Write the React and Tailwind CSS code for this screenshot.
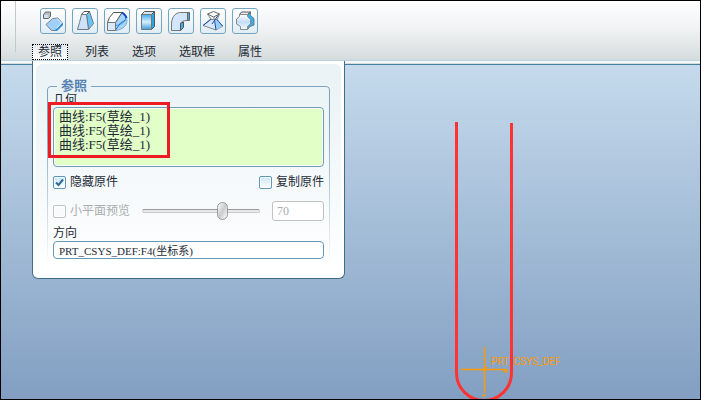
import React, { useState } from 'react';

const SHAPES = [
  {
    label: '缩放',
    art: (
      <>
        <path d="m2.5 5.5 2-2.500h5v4.500l-2 2h-5z" fill="#b4c1cc" stroke="#666" />
        <path d="M3 6h4v3H3z" fill="#cfe0f0" />
        <path d="M11.500 9.500 17 9l4.500 5.500v1.500L16 21.500h-5.500L5 15.500z" fill="#a0cffa" stroke="#7c858f" />
        <path d="m14 21 7.500-7.500V16L16 21.500h-5z" fill="#1b8eec" />
        <path d="m16 9.500 4.500 4.500-5 5.500" stroke="#e5f3ff" />
      </>
    ),
  },
  {
    label: '拔模',
    art: (
      <>
        <path d="m13.500 5.500 3-3 4 12-5 6z" fill="#62c8fb" stroke="#777" />
        <path d="m8.500 5.500 2.500-3h5.500l-3 3z" fill="#fff" stroke="#555" />
        <path d="M8.500 5.500h5l2 15h-11l2-7z" fill="#cfe2fc" stroke="#777" />
      </>
    ),
  },
  {
    label: '扫描',
    art: (
      <>
        <path d="M17 3.500c4 2 5 5 5 8 0 6-5 9-11.500 10v-8z" fill="#a5d6f7" stroke="#7aa9cc" />
        <path d="M17 3.500c3 1.500 4 4 3.500 6.500-1 4-5 6-10 6.500" stroke="#3a9ee8" />
        <path d="M17 3.500c3 2 4 3 4.500 5.500" stroke="#0946c5" strokeWidth="2" />
        <path d="m10.500 21 5-7 5-3" stroke="#2f6fd0" />
        <path d="M8.500 3.500H17l-6.500 10h-8l2-5z" fill="#fff" stroke="#555" />
        <path d="M2.500 13.500h8v8h-8z" fill="#d8e9fc" stroke="#777" />
      </>
    ),
  },
  {
    label: '拉伸',
    art: (
      <>
        <path d="m14.500 5.500 3-3v15l-3 3z" fill="#27a5e9" stroke="#555" />
        <path d="m4.500 5.500 3-3h10l-3 3z" fill="#d5e6f1" stroke="#555" />
        <path d="M4.500 5.500h10v15h-10z" fill="url(#tubeFill)" stroke="#777" />
      </>
    ),
  },
  {
    label: '折弯',
    art: (
      <>
        <path d="M2.500 21.500V15c0-6 3-10.500 8-11.500h8v8c-4 0-7 1-7 4v6z" fill="#d3e6fd" stroke="#777" />
        <path d="M18.500 3.500h2v8h-2z" fill="#35b4f0" stroke="#666" />
        <path d="m11.500 14.500 3-1.500v5.500l-3 3z" fill="#35b4f0" stroke="#555" />
      </>
    ),
  },
  {
    label: '混合',
    art: (
      <>
        <path d="m10 10.500-8 6 13 4.500 7-4-7-6.500z" fill="#d9e9fb" stroke="#888" />
        <path d="m14 10.500 1 10.500 7-4-6-6z" fill="#9ccdf7" />
        <path d="M10 10 2 16.500M13.500 11l1.500 10M15.500 10l6 7M18 5l-7 10" stroke="#1b48a8" />
        <path d="m6.500 5.500 4 5M18.500 5l-2.500 6M13 8v3" stroke="#888" />
        <path d="m6.500 5 6-2.500 6 2.500-6 3z" fill="#fff" stroke="#666" />
      </>
    ),
  },
  {
    label: '旋转混合',
    art: (
      <>
        <path d="m14.500 5.500 3-2.500v3.500l3.500 3V16l-4 1.500-2.500 3z" fill="#2fb0f0" stroke="#777" />
        <path d="m6.500 5.500 2-2.500h9l-3 2.500z" fill="#e0f0fb" stroke="#555" />
        <path d="M6.500 5.500h8v2l3 3V15l-3 2.500v3h-7v-3L3.500 15v-5l3-2.500z" fill="url(#vaseFill)" stroke="#888" />
      </>
    ),
  },
];

const TABS = ['参照', '列表', '选项', '选取框', '属性'];

const CURVES = [1, 2, 3];

const CheckBox = ({ label, ...props }) => (
  <label className="flex items-center gap-1 leading-[18px] has-disabled:text-[#a9adb0]">
    <span className="grid">
      <input
        type="checkbox"
        className="peer col-start-1 row-start-1 size-[13px] appearance-none rounded-xs border border-[#5b97b8] bg-linear-to-b from-[#c9e5f7] to-white shadow-[inset_0_0_0_1px_white] disabled:border-[#bfc3c5] disabled:bg-none"
        {...props}
      />
      <svg
        viewBox="0 0 13 13"
        className="pointer-events-none invisible col-start-1 row-start-1 size-[13px] peer-checked:visible"
      >
        <path d="M3 6.500 5.500 9 10 3.500" fill="none" stroke="#286c97" strokeWidth="2" />
      </svg>
    </span>
    {label}
  </label>
);

const Toolbar = ({ activeTab, onTabChange }) => (
  <header className="border-b border-[#477f9f]">
    <div className="flex border-b border-[#b7d2e2] bg-linear-to-b from-white via-[#eff2f3] to-[#d5dbdc]">
      <div className="mb-2 w-[15px] border-r border-[#bccad2]" />
      <div className="flex-1 pt-[7px] pl-4">
        <div className="flex gap-1.5 pl-2">
          {SHAPES.map((shape) => (
            <button
              key={shape.label}
              type="button"
              aria-label={shape.label}
              className="size-[26px] rounded-[3px] border border-[#76a5c0] bg-linear-to-b from-white to-[#dfedf5]"
            >
              <svg viewBox="0 0 24 24" fill="none" className="size-6">
                {shape.art}
              </svg>
            </button>
          ))}
        </div>
        <div className="mt-2 flex gap-[11px]">
          {TABS.map((tab) => (
            <button
              key={tab}
              type="button"
              onClick={() => onTabChange(tab)}
              className={
                tab === activeTab
                  ? 'h-[18px] rounded-t bg-linear-to-b from-[#dfe8ee] to-white pt-0.5'
                  : 'h-[18px] px-1.5 pt-0.5'
              }
            >
              <span
                className={
                  tab === activeTab
                    ? 'block border border-dotted border-black px-[5px] leading-3.5'
                    : 'block leading-4'
                }
              >
                {tab}
              </span>
            </button>
          ))}
        </div>
      </div>
    </div>
    <div className="h-[3px] border-b border-[#d6dddc] bg-[#f4f8f8]" />
  </header>
);

const ReferencePanel = () => {
  const [facet, setFacet] = useState(70);

  return (
    <section className="relative z-10 -mt-1 ml-[31px] w-[313px] self-start rounded-b-md border-x border-b border-[#416b88] bg-white p-[3px]">
      <div className="rounded-md bg-linear-to-b from-[#e9f2f5] to-white px-[11px] pt-3.5 pb-3">
        <fieldset className="relative px-1.5 pb-1">
          <div className="absolute inset-x-0 top-2 bottom-0 rounded-t border border-b-0 border-[#7da3c1] mask-b-from-20% mask-b-to-100%" />
          <legend className="relative float-left ml-1 bg-[#eaf2f5] px-1 text-[13px] leading-4 font-bold text-[#5582b3]">
            参照
          </legend>
          <div className="relative clear-both">
            <div id="geometry" className="h-3 leading-3">几何</div>
            <ul
              role="listbox"
              aria-labelledby="geometry"
              className="mt-px h-[60px] rounded border border-[#709cb8] bg-[#e2ffc8] px-[5px] py-0.5 text-[13px] leading-3.5 shadow-[inset_0_0_0_1px_white]"
            >
              {CURVES.map((id) => (
                <li key={id} role="option" aria-selected="false">曲线:F5(草绘_1)</li>
              ))}
            </ul>
            {/* highlight around the selected curves */}
            <div className="pointer-events-none absolute top-2 -left-[5px] h-14 w-[122px] border-3 border-[#ed1c24]" />
          </div>
          <div className="mt-1.5 flex justify-between">
            <CheckBox label="隐藏原件" defaultChecked />
            <CheckBox label="复制原件" />
          </div>
          <div className="mt-2.5 flex h-5 items-center gap-3">
            <CheckBox label="小平面预览" disabled />
            <input
              type="range"
              aria-label="小平面预览"
              disabled
              value={facet}
              onChange={(e) => setFacet(Number(e.target.value))}
              className="h-5 min-w-0 flex-1 appearance-none bg-transparent [&::-webkit-slider-runnable-track]:h-1 [&::-webkit-slider-runnable-track]:rounded-full [&::-webkit-slider-runnable-track]:border [&::-webkit-slider-runnable-track]:border-t-[#999] [&::-webkit-slider-runnable-track]:border-[#c8cbcd] [&::-webkit-slider-runnable-track]:bg-[#e7eaeb] [&::-webkit-slider-thumb]:-mt-2 [&::-webkit-slider-thumb]:h-[18px] [&::-webkit-slider-thumb]:w-[11px] [&::-webkit-slider-thumb]:appearance-none [&::-webkit-slider-thumb]:rounded-full [&::-webkit-slider-thumb]:border [&::-webkit-slider-thumb]:border-[#999] [&::-webkit-slider-thumb]:bg-linear-to-br [&::-webkit-slider-thumb]:from-white [&::-webkit-slider-thumb]:via-[#c9cccd] [&::-webkit-slider-thumb]:to-white"
            />
            <input
              type="text"
              aria-label="预览质量"
              disabled
              value={facet}
              onChange={(e) => setFacet(Number(e.target.value))}
              className="h-5 w-[52px] rounded-[3px] border border-[#c0c2c3] bg-white px-1 text-[#a9adb0]"
            />
          </div>
          <label htmlFor="direction" className="mt-1 block leading-4">方向</label>
          <input
            id="direction"
            type="text"
            defaultValue="PRT_CSYS_DEF:F4(坐标系)"
            className="block h-[18px] w-full rounded border border-[#6798b5] bg-white px-[5px] text-[11px] leading-4"
          />
        </fieldset>
      </div>
    </section>
  );
};

const Viewport = () => (
  <svg
    viewBox="345 65 355 334"
    preserveAspectRatio="xMinYMin slice"
    fill="none"
    className="h-[334px] min-w-0 flex-1"
  >
    <g stroke="#ff9900" strokeWidth="1.500">
      <path d="M484.500 347v46" />
      <path d="M461 369.500H507M506.500 369v4M503 371.500h4M482 371l5-4M482 395.500h4" />
    </g>
    <text x="491" y="365" fontSize="10" fill="#ff9900" className="font-['Roboto']">
      PRT_CSYS_DEF
    </text>
    <path d="M456.500 122V373a27.500 27.500 0 0 0 55 0V123" stroke="#ff3333" strokeWidth="3" />
  </svg>
);

const App = () => {
  const [activeTab, setActiveTab] = useState('参照');

  return (
    <div className="flex min-h-screen flex-col overflow-hidden border border-black font-['Liberation_Serif','Noto_Sans_CJK_SC',serif] text-xs text-[#1d2b35]">
      <svg className="absolute size-0" aria-hidden="true">
        <defs>
          <linearGradient id="tubeFill" x2="0" y2="1">
            <stop stopColor="#43acee" />
            <stop offset=".5" stopColor="#d8f0fc" />
            <stop offset="1" stopColor="#3c9ce2" />
          </linearGradient>
          <linearGradient id="vaseFill" x2="0" y2="1">
            <stop stopColor="#fff" />
            <stop offset=".5" stopColor="#c3def7" />
            <stop offset="1" stopColor="#f2f8ff" />
          </linearGradient>
        </defs>
      </svg>
      <Toolbar activeTab={activeTab} onTabChange={setActiveTab} />
      <main className="flex flex-1 bg-linear-to-b from-[#c5daec] to-[#829fc2]">
        {activeTab === '参照' && <ReferencePanel />}
        <Viewport />
      </main>
    </div>
  );
};

export default App;
